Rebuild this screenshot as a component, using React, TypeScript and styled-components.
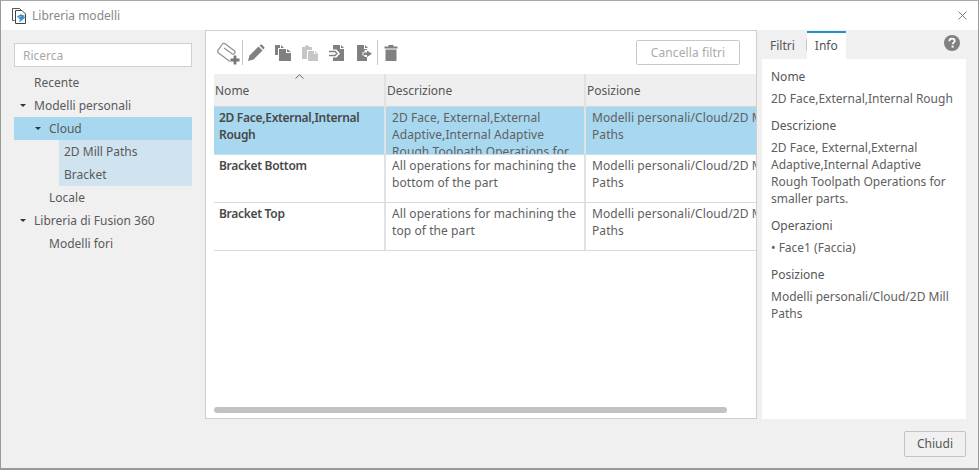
import styled, { createGlobalStyle } from "styled-components";
import { X } from "lucide-react";

const FONT = `"Noto Sans", "Liberation Sans", sans-serif`;

const Global = createGlobalStyle`
  html, body { margin: 0; padding: 0; height: 100%; background: #f0f0f0; }
  #root { height: 100%; }
  * { box-sizing: border-box; }
`;

type TreeRow = { label: string; level: number; arrow?: boolean; state?: "active" | "child" };

const treeRows: TreeRow[] = [
  { label: "Recente", level: 0 },
  { label: "Modelli personali", level: 0, arrow: true },
  { label: "Cloud", level: 1, arrow: true, state: "active" },
  { label: "2D Mill Paths", level: 2, state: "child" },
  { label: "Bracket", level: 2, state: "child" },
  { label: "Locale", level: 1 },
  { label: "Libreria di Fusion 360", level: 0, arrow: true },
  { label: "Modelli fori", level: 1 },
];

const models = [
  {
    name: "2D Face,External,Internal Rough",
    description: "2D Face, External,External Adaptive,Internal Adaptive Rough Toolpath Operations for smaller parts.",
    path: "Modelli personali/Cloud/2D Mill Paths",
    selected: true,
  },
  {
    name: "Bracket Bottom",
    description: "All operations for machining the bottom of the part",
    path: "Modelli personali/Cloud/2D Mill Paths",
  },
  {
    name: "Bracket Top",
    description: "All operations for machining the top of the part",
    path: "Modelli personali/Cloud/2D Mill Paths",
  },
];

const LibraryIcon = () => (
  <svg width="17" height="18" viewBox="0 0 17 18" fill="none">
    <path d="M3.5 13.5H1.5V1.5H8.5L10 3" stroke="#555" />
    <path d="M4.5 16.5V3.5H11L14.5 7V16.5Z" fill="#fff" stroke="#444" />
    <path d="M6.5 10L10 8L12.5 9L8 11.5L12.5 11L8.5 14.5" stroke="#2f8fd0" strokeWidth="1.5" />
  </svg>
);

const NewIcon = () => (
  <svg width="26" height="26" viewBox="0 0 26 26" fill="none">
    <path
      d="M14 21.5L2.5 13C1 11.8 1.5 10.8 2.5 9.5L6 4.5C7 3 8 3 9.5 4L18 10.5C20 12 18.5 15 16 13.8L8 8"
      stroke="#949494"
      strokeWidth="1.3"
    />
    <path d="M19 15.5V24.5M14.5 20H23.5" stroke="#777" strokeWidth="2.8" />
  </svg>
);

const PencilIcon = () => (
  <svg width="18" height="18" viewBox="0 0 18 18">
    <path d="M1 17L2.5 11.5L11.5 2.5L15.5 6.5L6.5 15.5Z" fill="#808080" />
    <path d="M12.5 1.5L13.5 0.7C14 0.3 14.6 0.3 15 0.7L17.2 3C17.6 3.4 17.6 4 17.2 4.4L16.4 5.4Z" fill="#808080" />
  </svg>
);

const CopyIcon = () => (
  <svg width="18" height="18" viewBox="0 0 18 18">
    <path d="M1 1H6V4H4V11H1Z" fill="#808080" />
    <path d="M5 5H12V9H17V17H5Z" fill="#808080" />
    <path d="M13 5L17 8H13Z" fill="#808080" />
    <path d="M7 1L10 4H7Z" fill="#808080" />
  </svg>
);

const PasteIcon = () => (
  <svg width="18" height="18" viewBox="0 0 18 18">
    <path d="M1 3H4V1.5H8V3H11V6H6V15H1Z" fill="#c6c6c6" />
    <path d="M7 7H13V10H17V17H7Z" fill="#c6c6c6" />
    <path d="M14 7L17 9.5H14Z" fill="#c6c6c6" />
  </svg>
);

const ImportIcon = () => (
  <svg width="18" height="18" viewBox="0 0 18 18">
    <path d="M5 1H12V5H16V17H5V13.5H8.5L12 9.5L8.5 5.5H5Z" fill="#808080" />
    <path d="M13 1L16 4H13Z" fill="#808080" />
    <path d="M1 7.5H7L9 9.5L7 11.5H1" fill="none" stroke="#808080" strokeWidth="1.4" />
  </svg>
);

const ExportIcon = () => (
  <svg width="18" height="18" viewBox="0 0 18 18">
    <path d="M2 1H9V5H12V6H9.5V8H7.5V11.5H9.5V13H12V17H2Z" fill="#808080" />
    <path d="M10 1L13 4H10Z" fill="#808080" />
    <path d="M8.5 8.5H12V6.5L17 9.7L12 13V11H8.5Z" fill="#808080" />
  </svg>
);

const TrashIcon = () => (
  <svg width="16" height="18" viewBox="0 0 16 18">
    <path d="M5.5 1H10.5V2.5H14.5V4.5H1.5V2.5H5.5Z" fill="#808080" />
    <path d="M2.5 5.5H13.5V17H2.5Z" fill="#808080" />
  </svg>
);

const HelpIcon = () => (
  <svg width="16" height="16" viewBox="0 0 16 16">
    <circle cx="8" cy="8" r="8" fill="#808080" />
    <path d="M5.3 6.2C5.4 4.6 6.5 3.7 8 3.7C9.6 3.7 10.7 4.6 10.7 5.9C10.7 7.6 8.6 7.7 8.6 9.3" fill="none" stroke="#fff" strokeWidth="1.8" />
    <rect x="7.6" y="10.6" width="2" height="2" fill="#fff" />
  </svg>
);

export default function App() {
  const selected = models[0];
  return (
    <Window>
      <Global />
      <TitleBar>
        <LibraryIcon />
        <Title>Libreria modelli</Title>
        <CloseIcon>
          <X size={15} strokeWidth={1.2} color="#555" />
        </CloseIcon>
      </TitleBar>
      <Body>
        <Sidebar>
          <Search placeholder="Ricerca" />
          <Tree>
            {treeRows.map((row) => (
              <TreeItem key={row.label} $level={row.level} $state={row.state}>
                {row.arrow && <Arrow />}
                {row.label}
              </TreeItem>
            ))}
          </Tree>
        </Sidebar>
        <Center>
          <Toolbar>
            <NewIcon />
            <ToolSep />
            <ToolButton><PencilIcon /></ToolButton>
            <ToolButton><CopyIcon /></ToolButton>
            <ToolButton><PasteIcon /></ToolButton>
            <ToolButton><ImportIcon /></ToolButton>
            <ToolButton><ExportIcon /></ToolButton>
            <ToolSep />
            <ToolButton><TrashIcon /></ToolButton>
            <ClearButton>Cancella filtri</ClearButton>
          </Toolbar>
          <Table>
            <HeaderRow>
              <HeaderCell>
                Nome
                <SortCaret viewBox="0 0 9 5" width="9" height="5">
                  <path d="M0.5 4.5L4.5 0.8L8.5 4.5" fill="none" stroke="#666" />
                </SortCaret>
              </HeaderCell>
              <HeaderCell>Descrizione</HeaderCell>
              <HeaderCell>Posizione</HeaderCell>
            </HeaderRow>
            {models.map((model) => (
              <Row key={model.name} $selected={model.selected}>
                <NameCell>{model.name}</NameCell>
                <Cell>{model.description}</Cell>
                <Cell>{model.path}</Cell>
              </Row>
            ))}
          </Table>
          <ScrollThumb />
        </Center>
        <Details>
          <Tabs>
            <Tab>Filtri</Tab>
            <TabDivider />
            <Tab $active>Info</Tab>
            <HelpSlot><HelpIcon /></HelpSlot>
          </Tabs>
          <InfoPane>
            <InfoLabel>Nome</InfoLabel>
            <InfoValue>{selected.name}</InfoValue>
            <InfoLabel>Descrizione</InfoLabel>
            <InfoValue>{selected.description}</InfoValue>
            <InfoLabel>Operazioni</InfoLabel>
            <InfoValue>• Face1 (Faccia)</InfoValue>
            <InfoLabel>Posizione</InfoLabel>
            <InfoValue>{selected.path}</InfoValue>
          </InfoPane>
        </Details>
      </Body>
      <Footer>
        <FooterButton>Chiudi</FooterButton>
      </Footer>
    </Window>
  );
}

const Window = styled.div`
  height: 470px;
  width: 979px;
  display: flex;
  flex-direction: column;
  background: #f0f0f0;
  border: 1px solid #9a9a9a;
  border-top-color: #a8a8a8;
  border-bottom-width: 2px;
  font-family: ${FONT};
  font-size: 12px;
  color: #555;
  overflow: hidden;
`;

const TitleBar = styled.div`
  height: 29px;
  flex: none;
  background: #fff;
  display: flex;
  align-items: center;
  padding: 0 8px 0 10px;
  gap: 4px;
`;

const Title = styled.div`
  font-size: 12px;
  color: #888;
`;

const CloseIcon = styled.div`
  margin-left: auto;
  display: flex;
`;

const Body = styled.div`
  height: 389px;
  flex: none;
  display: flex;
`;

const Sidebar = styled.div`
  width: 204px;
  flex: none;
  padding: 13px 13px 0 13px;
`;

const Search = styled.input`
  display: block;
  width: 178px;
  height: 24px;
  border: 1px solid #d0d0d0;
  background: #fff;
  padding: 0 8px;
  font-family: ${FONT};
  font-size: 12px;
  outline: none;
  &::placeholder {
    color: #a8a8a8;
    opacity: 1;
  }
`;

const Tree = styled.div`
  margin-top: 4px;
`;

const TreeItem = styled.div<{ $level: number; $state?: "active" | "child" }>`
  position: relative;
  height: 23px;
  line-height: 23px;
  white-space: nowrap;
  padding-left: ${(p) => (p.$state === "child" ? 5 : 20 + p.$level * 15)}px;
  margin-left: ${(p) => (p.$state === "child" ? 45 : 0)}px;
  color: #5a5a5a;
  background: ${(p) =>
    p.$state === "active" ? "#a7d8f0" : p.$state === "child" ? "#d0e4f0" : "transparent"};
`;

const Arrow = styled.span`
  position: absolute;
  margin-left: -14px;
  top: 10px;
  width: 0;
  height: 0;
  border-left: 3px solid transparent;
  border-right: 3px solid transparent;
  border-top: 3px solid #333;
`;

const Center = styled.div`
  width: 552px;
  flex: none;
  background: #fff;
  border: 1px solid #cfcfcf;
  display: flex;
  flex-direction: column;
  overflow: hidden;
`;

const Toolbar = styled.div`
  height: 43px;
  flex: none;
  display: flex;
  align-items: center;
  padding: 0 16px 0 10px;
`;

const ToolButton = styled.div`
  width: 27px;
  height: 20px;
  display: flex;
  align-items: center;
  justify-content: center;
`;

const ToolSep = styled.div`
  width: 1px;
  height: 25px;
  background: #c8c8c8;
  margin: 0 -1px 0 0;
`;

const ClearButton = styled.div`
  margin-left: auto;
  width: 104px;
  height: 25px;
  border: 1px solid #c8c8c8;
  border-radius: 2px;
  text-align: center;
  line-height: 23px;
  color: #aaa;
  letter-spacing: 0.1px;
`;

const Table = styled.div`
  margin-left: 8px;
  flex: 1;
  min-height: 0;
  overflow: hidden;
`;

const HeaderRow = styled.div`
  display: grid;
  grid-template-columns: 172px 200px 200px;
  height: 33px;
  background: #efefef;
  border-bottom: 1px solid #d6d6d6;
`;

const HeaderCell = styled.div`
  position: relative;
  line-height: 33px;
  padding-left: 1px;
  color: #555;
  border-right: 2px solid #e2e2e2;
  white-space: nowrap;
`;

const SortCaret = styled.svg`
  position: absolute;
  left: 81px;
  top: 0;
`;

const Row = styled.div<{ $selected?: boolean }>`
  display: grid;
  grid-template-columns: 172px 200px 200px;
  height: 48px;
  overflow: hidden;
  background: ${(p) => (p.$selected ? "#a7d8f0" : "#fff")};
  border-bottom: 1px solid ${(p) => (p.$selected ? "#c8dfec" : "#d9d9d9")};
`;

const Cell = styled.div`
  padding: 2px 4px 0 6px;
  line-height: 17px;
  height: 48px;
  overflow: hidden;
  color: #606060;
  letter-spacing: 0.08px;
  border-right: 2px solid #e2e2e2;
`;

const NameCell = styled(Cell)`
  padding-left: 5px;
  font-weight: 600;
  letter-spacing: -0.3px;
  color: #484848;
`;

const ScrollThumb = styled.div`
  width: 513px;
  height: 6px;
  margin: 0 0 5px 8px;
  border-radius: 3px;
  background: #c2c2c2;
  flex: none;
`;

const Details = styled.div`
  width: 204px;
  margin-left: 5px;
  flex: none;
  display: flex;
  flex-direction: column;
`;

const Tabs = styled.div`
  height: 29px;
  flex: none;
  display: flex;
  align-items: flex-end;
`;

const Tab = styled.div<{ $active?: boolean }>`
  height: 28px;
  line-height: 25px;
  padding: 0 ${(p) => (p.$active ? "8px" : "12px 0 8px")};
  background: ${(p) => (p.$active ? "#fff" : "transparent")};
  border-top: ${(p) => (p.$active ? "2px solid #1f93c8" : "2px solid transparent")};
  color: #555;
`;

const TabDivider = styled.div`
  width: 1px;
  height: 12px;
  background: #c8c8c8;
  margin: 0 0 8px -1px;
`;

const HelpSlot = styled.div`
  margin-left: auto;
  display: flex;
  margin-bottom: 8px;
  margin-right: 6px;
`;

const InfoPane = styled.div`
  flex: 1;
  background: #fff;
  padding: 9px 9px 0 9px;
`;

const InfoLabel = styled.div`
  color: #555;
  line-height: 18px;
`;

const InfoValue = styled.div`
  margin-top: 4px;
  margin-bottom: 10px;
  line-height: 17px;
  color: #606060;
`;

const Footer = styled.div`
  flex: 1;
  display: flex;
  justify-content: flex-end;
  align-items: flex-start;
  padding: 12px 12px 0 0;
`;

const FooterButton = styled.div`
  width: 62px;
  height: 26px;
  border: 1px solid #c4c4c4;
  border-radius: 2px;
  text-align: center;
  line-height: 24px;
  color: #555;
`;
